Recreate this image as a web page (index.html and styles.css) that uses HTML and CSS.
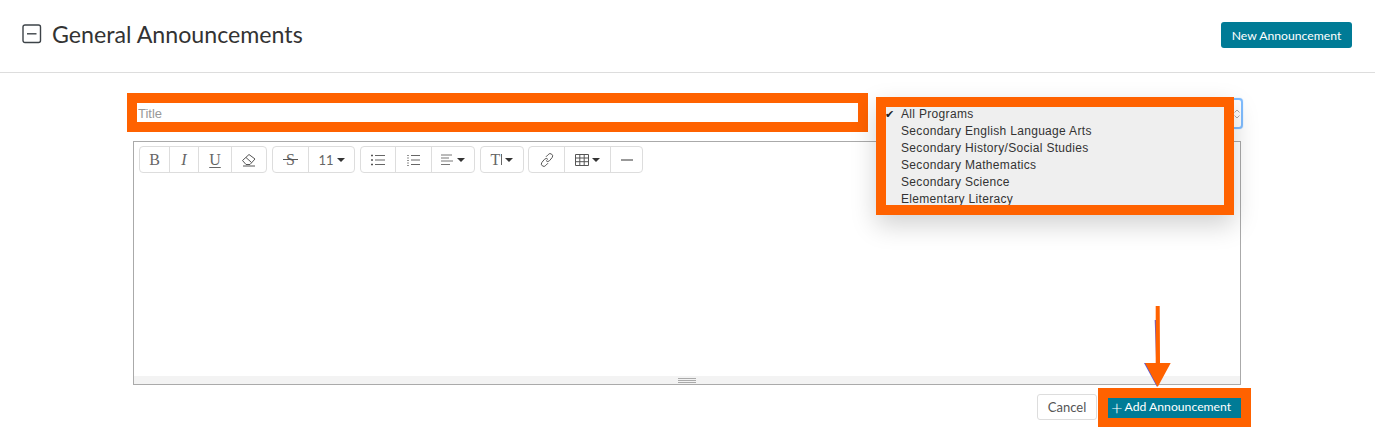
FILE: index.html
```html
<!DOCTYPE html>
<html lang="en">

<head>
    <meta charset="UTF-8">
    <meta name="viewport" content="width=device-width, initial-scale=1.0">
    <title>General Announcements</title>
    <link rel="stylesheet" href="styles.css">
</head>

<body>

    <!-- Header -->
    <header class="page-header">
        <div class="heading">
            <svg class="collapse-icon" width="20" height="20" viewBox="0 0 20 20">
                <rect x="1" y="1" width="17.500" height="17.500" rx="2" fill="none" stroke="#3d4348" stroke-width="1.4" />
                <path d="M5 9.800h9.500" stroke="#3d4348" stroke-width="1.4" />
            </svg>
            <h1>General Announcements</h1>
        </div>
        <button class="btn-primary">New Announcement</button>
    </header>

    <!-- Announcement form -->
    <main class="form">
        <div class="top-row">
            <input class="title-input" type="text" placeholder="Title">
            <div class="program-select">
                <svg class="select-arrows" width="6" height="10" viewBox="0 0 6 10">
                    <path d="M.5 3.500 3 1l2.500 2.500M.5 6.500 3 9l2.500-2.500" fill="none" stroke="#aaa" />
                </svg>
                <ul class="program-menu">
                    <li class="checked">All Programs</li>
                    <li>Secondary English Language Arts</li>
                    <li>Secondary History/Social Studies</li>
                    <li>Secondary Mathematics</li>
                    <li>Secondary Science</li>
                    <li>Elementary Literacy</li>
                </ul>
            </div>
        </div>

        <!-- Editor -->
        <div class="editor">
            <div class="toolbar">
                <div class="btn-group">
                    <span class="tool w-b serif">B</span>
                    <span class="tool w-i serif italic">I</span>
                    <span class="tool w-u serif underline">U</span>
                    <span class="tool w-e">
                        <svg width="16" height="14" viewBox="0 0 16 14">
                            <path d="M1.500 7.500 8 1.500l6 4.500-5 5.500H5z" fill="none" stroke="#555" />
                            <path d="M5 4.500 10.500 9.500" fill="none" stroke="#555" />
                            <path d="M2 13h12" stroke="#555" />
                        </svg>
                    </span>
                </div>
                <div class="btn-group">
                    <span class="tool w-s">
                        <span class="serif">S</span>
                        <span class="strike-line"></span>
                    </span>
                    <span class="tool w-size">11<i class="caret"></i></span>
                </div>
                <div class="btn-group">
                    <span class="tool w-list">
                        <svg width="14" height="12" viewBox="0 0 14 12">
                            <path d="M0 1.500h2M0 6h2M0 10.500h2" stroke="#555" stroke-width="1.400" />
                            <path d="M4 1.500h10M4 6h10M4 10.500h10" stroke="#666" />
                        </svg>
                    </span>
                    <span class="tool w-list2">
                        <svg width="13" height="12" viewBox="0 0 13 12">
                            <path d="M0 1.500h2M0 4h2M0 6.500h2M0 9h2M0 11.500h2" stroke="#777" stroke-width=".8" />
                            <path d="M4 1.500h9M4 6h9M4 10.500h9" stroke="#666" />
                        </svg>
                    </span>
                    <span class="tool w-align">
                        <svg width="13" height="12" viewBox="0 0 13 12">
                            <path d="M0 1h11M0 4h8M0 7h12M0 10.500h9" stroke="#777" />
                        </svg>
                        <i class="caret"></i>
                    </span>
                </div>
                <div class="btn-group group-tight">
                    <span class="tool w-height"><span class="serif">T</span><span class="bar"></span><i class="caret"></i></span>
                </div>
                <div class="btn-group">
                    <span class="tool w-link">
                        <svg width="14" height="14" viewBox="0 0 14 14">
                            <path d="M6 3.800 8.200 1.600a2.400 2.400 0 0 1 3.900 3L9.600 7.600a2.400 2.400 0 0 1-3.600 0" fill="none" stroke="#555" />
                            <path d="M8 10.200 5.800 12.400a2.400 2.400 0 0 1-3.900-3l2.500-3a2.400 2.400 0 0 1 3.600 0" fill="none" stroke="#555" />
                        </svg>
                    </span>
                    <span class="tool w-table">
                        <svg width="14" height="12" viewBox="0 0 14 12">
                            <path d="M.5.500h13v11H.5zM.5 4h13M.5 7.700h13M4.800.5v11M9.200.5v11" fill="none" stroke="#555" />
                        </svg>
                        <i class="caret"></i>
                    </span>
                    <span class="tool w-hr">
                        <svg width="12" height="2" viewBox="0 0 12 2">
                            <path d="M0 1h12" stroke="#555" stroke-width="1.200" />
                        </svg>
                    </span>
                </div>
            </div>
            <div class="resize-bar"><span class="grip"></span></div>
        </div>

        <div class="actions">
            <button class="btn-cancel">Cancel</button>
            <button class="btn-add"><span class="plus">+</span>Add Announcement</button>
        </div>
    </main>

    <!-- Annotation arrow -->
    <svg class="arrow" width="28" height="82" viewBox="0 0 28 82">
        <path d="M11.700 14h1.500v43H1L14 81z" fill="#5b5bd6" />
        <path d="M12.700 0h4l.3 57h10.700L14.700 81 2 57h10.700z" fill="#ff6200" />
    </svg>

</body>

</html>
```

FILE: styles.css
```css
/* Global styles */
* {
    margin: 0;
    padding: 0;
    box-sizing: border-box;
}

body {
    position: relative;
    height: 427px;
    overflow: hidden;
    background-color: #fff;
    font-family: 'Lato', sans-serif;
    color: #333;
}

/* Header */
.page-header {
    display: flex;
    justify-content: space-between;
    align-items: center;
    height: 73px;
    padding: 0 23px 0 22px;
    border-bottom: 1px solid #ddd;
}

.heading {
    display: flex;
    align-items: center;
    gap: 10px;
    margin-top: -5px;
}

.collapse-icon {
    display: block;
}

h1 {
    font-size: 23.200px;
    font-weight: 400;
    line-height: 30px;
}

.btn-primary {
    width: 131px;
    height: 26px;
    margin-top: -2px;
    background-color: #007b96;
    color: #fff;
    border: none;
    border-radius: 3px;
    font-family: 'Lato', sans-serif;
    font-size: 12.200px;
}

/* Form */
.form {
    width: 1108px;
    margin-left: 133px;
}

.top-row {
    display: flex;
    height: 68px;
    padding: 30px 0 0 4px;
}

.title-input {
    width: 721px;
    height: 19px;
    border: none;
    outline: 10px solid #ff6200;
    padding: 2px 0 0 1px;
    font-family: 'Liberation Sans', sans-serif;
    font-size: 13px;
    background-color: #fff;
}

.title-input::placeholder {
    color: #999;
}

/* Program select with its open menu */
.program-select {
    position: absolute;
    left: 1100px;
    top: 98px;
    width: 143px;
    height: 31px;
    border: 2px solid #80bdff;
    border-radius: 4px;
    box-shadow: 0 0 1px #80bdff;
}

.select-arrows {
    position: absolute;
    right: 1px;
    top: 9px;
}

.program-menu {
    position: absolute;
    left: -216px;
    top: 7px;
    width: 338px;
    height: 98px;
    overflow: hidden;
    list-style: none;
    background-color: #efefef;
    outline: 10px solid #ff6200;
    box-shadow: 0 10px 24px 10px rgba(0, 0, 0, 0.18);
    font-family: 'Liberation Sans', sans-serif;
    font-size: 12px;
    letter-spacing: 0.320px;
    color: #333;
}

.program-menu li {
    position: relative;
    height: 17px;
    line-height: 14px;
    padding-left: 15px;
}

.program-menu .checked::before {
    content: "✔";
    position: absolute;
    left: -1px;
    top: 1px;
    font-family: 'DejaVu Sans', sans-serif;
    font-size: 11px;
    color: #222;
}

/* Editor */
.editor {
    display: flex;
    flex-direction: column;
    justify-content: space-between;
    height: 244px;
    border: 1px solid #aaa;
}

.toolbar {
    display: flex;
    gap: 5px;
    padding: 4px 0 0 5px;
}

.btn-group {
    display: flex;
    height: 27px;
    border: 1px solid #ddd;
    border-radius: 4px;
}

.group-tight {
    margin-right: -1px;
}

.tool {
    position: relative;
    display: flex;
    justify-content: center;
    align-items: center;
    gap: 3px;
    height: 100%;
    border-left: 1px solid #ddd;
    font-size: 13px;
    color: #666;
}

.tool:first-child {
    border-left: none;
}

.serif {
    font-family: 'Liberation Serif', serif;
    font-size: 16px;
    color: #666;
}

.italic {
    font-style: italic;
}

.underline {
    text-decoration: underline;
    text-underline-offset: 2px;
    text-decoration-thickness: 1px;
}

.strike-line {
    position: absolute;
    left: 10px;
    top: 12px;
    width: 15px;
    height: 1px;
    background-color: #555;
}

.caret {
    display: inline-block;
    border-top: 4px solid #333;
    border-left: 4px solid transparent;
    border-right: 4px solid transparent;
}

.bar {
    width: 1px;
    height: 11px;
    margin-left: -2px;
    background-color: #666;
}

/* Toolbar button widths */
.w-b { width: 29px; }
.w-i { width: 29px; }
.w-u { width: 33px; }
.w-e { width: 35px; }
.w-s { width: 35px; }
.w-size { width: 46px; }
.w-list { width: 34px; }
.w-list2 { width: 36px; }
.w-align { width: 43px; }
.w-height { width: 42px; }
.w-link { width: 35px; }
.w-table { width: 46px; }
.w-hr { width: 32px; }

/* Resize bar */
.resize-bar {
    display: flex;
    justify-content: center;
    align-items: center;
    height: 8px;
    background-color: #f3f3f3;
}

.grip {
    width: 18px;
    height: 5px;
    border-top: 1px solid #aaa;
    border-bottom: 1px solid #aaa;
    background: linear-gradient(#aaa, #aaa) center / 100% 1px no-repeat;
}

/* Actions */
.actions {
    display: flex;
    align-items: center;
    gap: 11px;
    height: 26px;
    margin-top: 9px;
    padding-left: 904px;
}

.btn-cancel {
    width: 60px;
    height: 26px;
    background-color: #fff;
    border: 1px solid #ddd;
    border-radius: 3px;
    font-family: 'Lato', sans-serif;
    font-size: 13px;
    color: #555;
}

.btn-add {
    display: flex;
    align-items: center;
    width: 133px;
    height: 20px;
    margin-top: 2px;
    padding: 0 0 3px 3px;
    background-color: #007b96;
    color: #fff;
    border: none;
    outline: 10px solid #ff6200;
    font-family: 'Lato', sans-serif;
    font-size: 12.200px;
}

.plus {
    margin-right: 2px;
    font-size: 20px;
    font-weight: 300;
    line-height: 18px;
}

/* Annotation arrow */
.arrow {
    position: absolute;
    left: 1143px;
    top: 306px;
}
```
